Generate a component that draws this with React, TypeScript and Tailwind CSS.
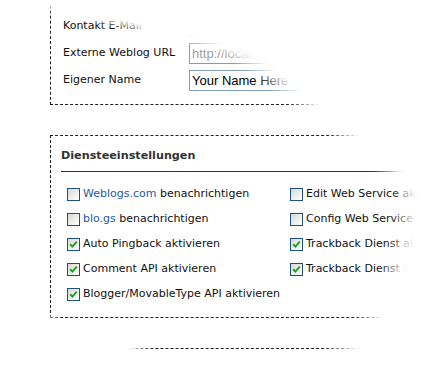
import React from "react";

const sans = "font-['DejaVu_Sans',Verdana,sans-serif]";

function Box({ checked }: { checked?: boolean }) {
  return (
    <span className="flex h-[13px] w-[13px] shrink-0 items-center justify-center border border-[#1c5180] bg-[linear-gradient(135deg,#d8d8d2,#ffffff)]">
      {checked && (
        <svg width="9" height="9" viewBox="0 0 9 9">
          <path d="M1.2 4.2 L3.4 6.6 L7.8 1.6" fill="none" stroke="#21a121" strokeWidth="2" />
        </svg>
      )}
    </span>
  );
}

function Check({ checked, children }: { checked?: boolean; children: React.ReactNode }) {
  return (
    <div className="flex h-[25px] items-center gap-[3px]">
      <Box checked={checked} />
      <span className="whitespace-nowrap">{children}</span>
    </div>
  );
}

function Field({ label, value, muted }: { label: string; value?: string; muted?: boolean }) {
  return (
    <div className="flex h-[27px] items-center">
      <span className="w-[126px] shrink-0">{label}</span>
      {value !== undefined && (
        <input
          readOnly
          value={value}
          className={
            "h-[21px] w-[260px] border border-[#7f9db9] bg-white px-[2px] font-['Liberation_Sans',Arial,sans-serif] text-[13px] outline-none " +
            (muted ? "text-[#a0a0a0]" : "text-black")
          }
        />
      )}
    </div>
  );
}

export default function App() {
  return (
    <div className={"relative h-[372px] w-[421px] overflow-hidden bg-white text-[11px] text-[#111] " + sans}>
      <div className="pl-[50px]">
        {/* Profil */}
        <div className="-mt-[20px] w-[480px] border border-dashed border-[#222] pb-[10px] pl-[12px] pt-[5px]">
          <Field label="Gravatar" />
          <Field label="Kontakt E-Mail" value="" />
          <Field label="Externe Weblog URL" value="http://localhost/" muted />
          <Field label="Eigener Name" value="Your Name Here" />
        </div>

        {/* Dienste */}
        <div className="mt-[30px] w-[480px] border border-dashed border-[#222] pb-[10px] pl-[10px] pt-[12px]">
          <h2 className="border-b border-[#0a3590] pb-[7px] text-[11.2px] font-bold leading-[16px] text-[#333]">
            Diensteeinstellungen
          </h2>
          <div className="ml-[6px] mt-[10px] grid grid-cols-[223px_1fr]">
            <Check>
              <span className="text-[#1e5aa8]">Weblogs.com</span> benachrichtigen
            </Check>
            <Check>Edit Web Service aktivieren</Check>
            <Check>
              <span className="text-[#1e5aa8]">blo.gs</span> benachrichtigen
            </Check>
            <Check>Config Web Service aktivieren</Check>
            <Check checked>Auto Pingback aktivieren</Check>
            <Check checked>Trackback Dienst aktivieren</Check>
            <Check checked>Comment API aktivieren</Check>
            <Check checked>Trackback Dienst anzeigen</Check>
            <Check checked>Blogger/MovableType API aktivieren</Check>
          </div>
        </div>

        <div className="mt-[30px] h-[60px] w-[480px] border border-dashed border-[#222]" />
      </div>

      {/* fade out towards the edges */}
      <div className="pointer-events-none absolute inset-0 bg-[linear-gradient(13deg,transparent_360px,#fff_371px)]" />
      <div className="pointer-events-none absolute inset-0 bg-[linear-gradient(38deg,transparent_387px,#fff_408px)]" />
      <div className="pointer-events-none absolute bottom-0 left-0 right-0 top-[110px] bg-[radial-gradient(ellipse_218px_218px_at_200px_90px,transparent_88%,#fff_100%)]" />
      <div className="pointer-events-none absolute inset-0 bg-[linear-gradient(199deg,transparent_417px,#fff_425px)]" />
    </div>
  );
}
